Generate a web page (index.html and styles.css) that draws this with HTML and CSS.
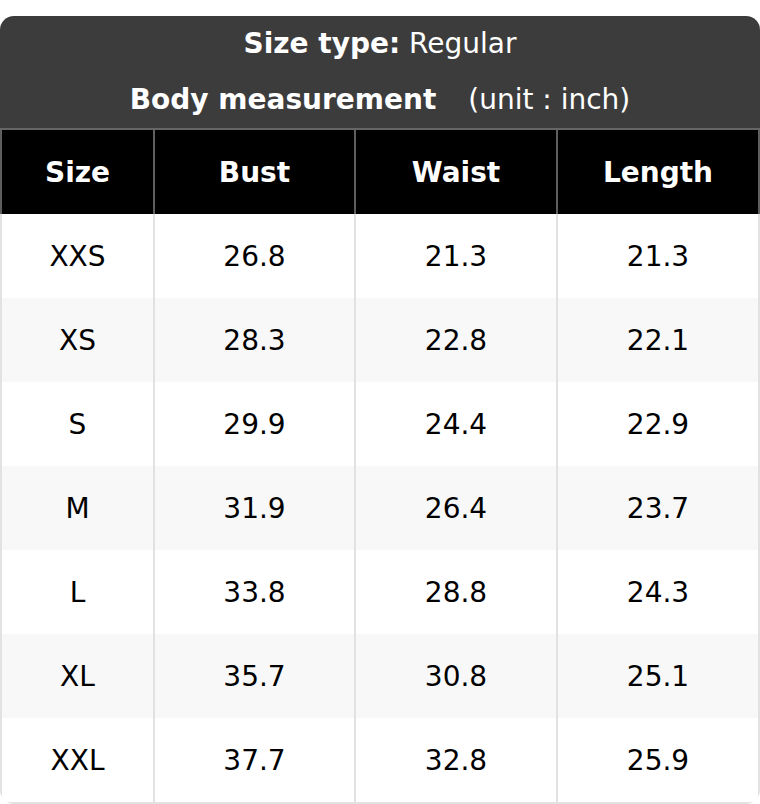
FILE: index.html
```html
<!DOCTYPE html>
<html>
<head>
<meta charset="utf-8">
<link rel="stylesheet" href="styles.css">
</head>
<body>
<div class="card">
  <div class="title">
    <div class="line"><b>Size type:</b> Regular</div>
    <div class="line"><b>Body measurement</b><span class="unit">(unit : inch)</span></div>
  </div>
  <table class="sizes">
    <colgroup><col class="c1"><col class="c2"><col class="c3"><col class="c4"></colgroup>
    <thead>
      <tr><th>Size</th><th>Bust</th><th>Waist</th><th>Length</th></tr>
    </thead>
    <tbody>
      <tr><td>XXS</td><td>26.8</td><td>21.3</td><td>21.3</td></tr>
      <tr><td>XS</td><td>28.3</td><td>22.8</td><td>22.1</td></tr>
      <tr><td>S</td><td>29.9</td><td>24.4</td><td>22.9</td></tr>
      <tr><td>M</td><td>31.9</td><td>26.4</td><td>23.7</td></tr>
      <tr><td>L</td><td>33.8</td><td>28.8</td><td>24.3</td></tr>
      <tr><td>XL</td><td>35.7</td><td>30.8</td><td>25.1</td></tr>
      <tr><td>XXL</td><td>37.7</td><td>32.8</td><td>25.9</td></tr>
    </tbody>
  </table>
</div>
</body>
</html>
```
FILE: styles.css
```css
html, body { margin: 0; padding: 0; background: #fff; }
body { padding-top: 16px; font-family: "DejaVu Sans", sans-serif; }
.card {
  width: 760px;
  border-radius: 14px;
  overflow: hidden;
}
.title {
  background: #3c3c3c;
  color: #fff;
  text-align: center;
  font-size: 28px;
  height: 112px;
  display: flex;
  flex-direction: column;
  justify-content: center;
  gap: 24px;
  border-bottom: 2px solid #666;
}
.line { line-height: 32px; }
.unit { margin-left: 32px; }
.sizes {
  width: 100%;
  border-collapse: collapse;
  table-layout: fixed;
  font-size: 28px;
}
.c1 { width: 153px; }
.c2 { width: 201px; }
.c3 { width: 202px; }
.sizes th {
  background: #000;
  color: #fff;
  font-weight: bold;
  height: 84px;
  padding: 0;
  border-left: 2px solid #5e5e5e;
  border-right: 2px solid #5e5e5e;
}
.sizes td {
  height: 84px;
  padding: 0;
  text-align: center;
  color: #000;
  border-left: 2px solid #e2e2e2;
  border-right: 2px solid #e2e2e2;
}
.sizes tbody tr:last-child td { border-bottom: 2px solid #e2e2e2; }
.sizes tbody tr:nth-child(even) td { background: #f8f8f8; }
```
